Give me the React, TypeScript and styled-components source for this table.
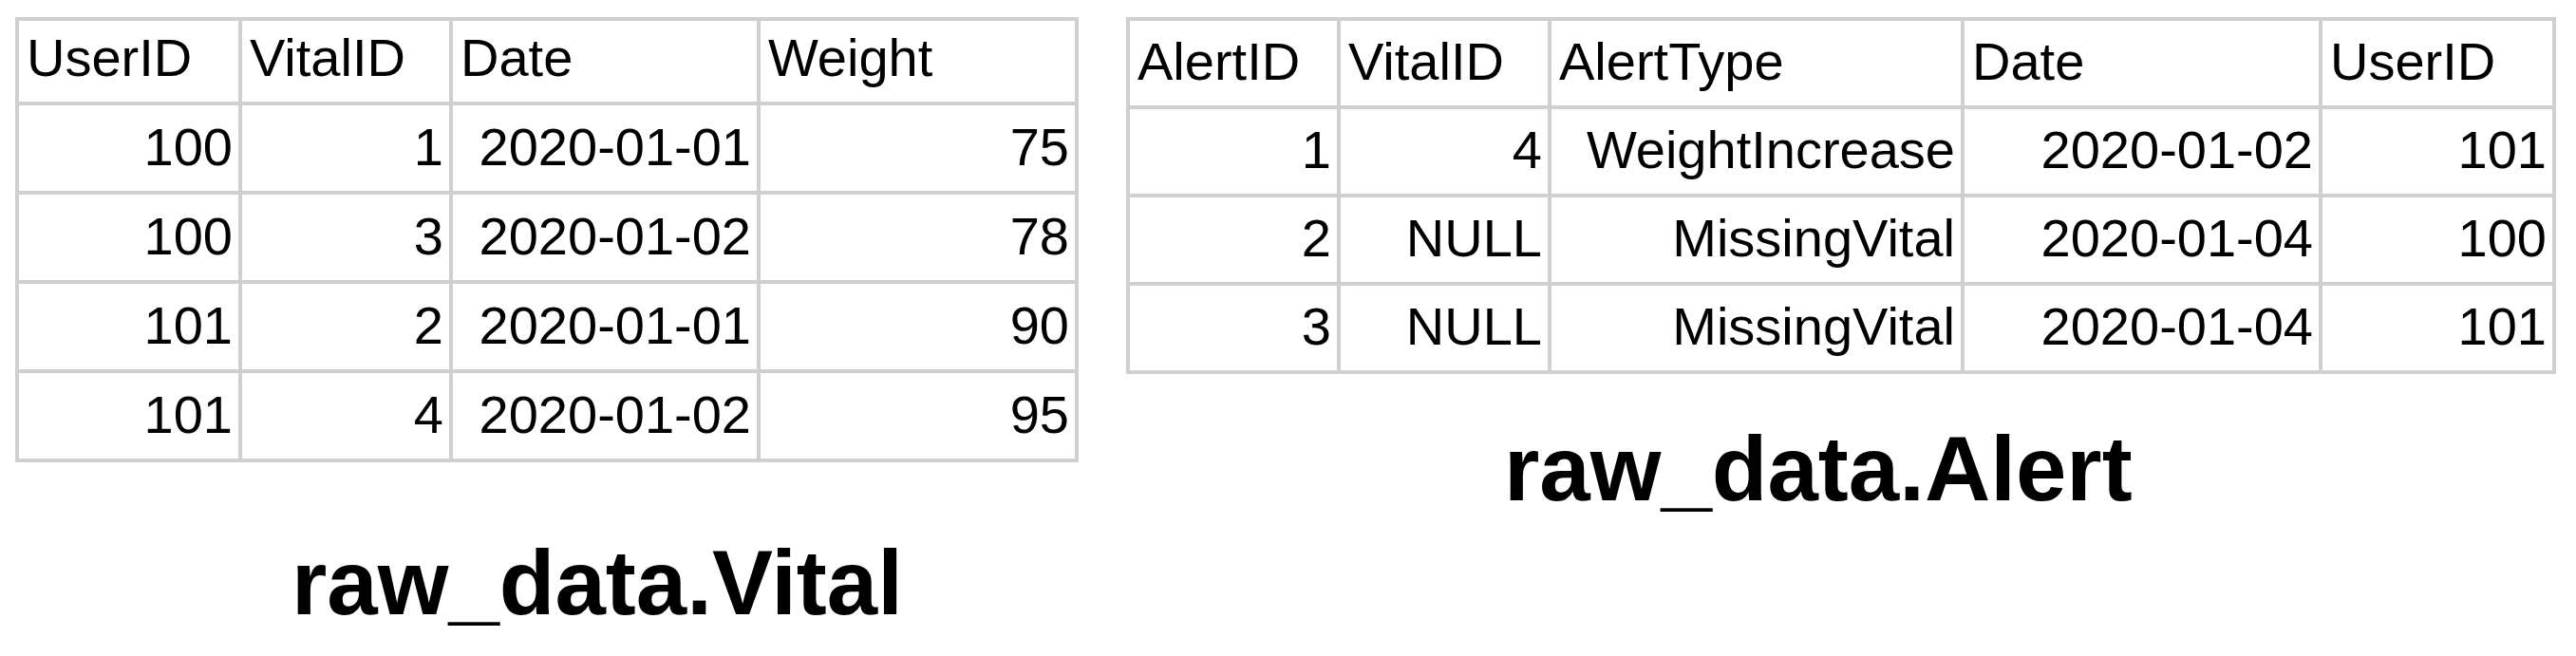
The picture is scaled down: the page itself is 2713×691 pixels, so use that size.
import React from "react";
import styled, { createGlobalStyle } from "styled-components";

const GlobalStyle = createGlobalStyle`
  html, body {
    margin: 0;
    padding: 0;
    background: #ffffff;
  }
  body {
    font-family: "Liberation Sans", Arial, sans-serif;
    color: #000000;
  }
`;

const Page = styled.div`
  display: flex;
  align-items: flex-start;
  gap: 50px;
  padding: 18px 0 0 16px;
  width: 2713px;
  height: 691px;
  box-sizing: border-box;
  background: #ffffff;
`;

const Section = styled.div`
  display: flex;
  flex-direction: column;
`;

const Grid = styled.div<{ $cols: string; $rows: string }>`
  display: grid;
  grid-template-columns: ${(p) => p.$cols};
  grid-template-rows: ${(p) => p.$rows};
  gap: 4px;
  padding: 4px;
  background: #cfcfcf;
`;

const CellBase = styled.div`
  display: flex;
  align-items: flex-end;
  background: #ffffff;
  font-size: 56px;
  line-height: 1;
  padding: 0 6px 18px 8px;
  white-space: nowrap;
  overflow: hidden;
`;

const HeadCell = styled(CellBase)`
  justify-content: flex-start;
`;

const Cell = styled(CellBase)`
  justify-content: flex-end;
`;

const Title = styled.div<{ $top: number; $left: number }>`
  margin-top: ${(p) => p.$top}px;
  padding-left: ${(p) => p.$left}px;
  font-size: 96px;
  font-weight: 700;
  line-height: 1;
  white-space: nowrap;
`;

type TableProps = {
  cols: string;
  rows: string;
  header: string[];
  data: (string | number)[][];
};

const DataTable: React.FC<TableProps> = ({ cols, rows, header, data }) => (
  <Grid $cols={cols} $rows={rows}>
    {header.map((h) => (
      <HeadCell key={h}>{h}</HeadCell>
    ))}
    {data.map((row, ri) =>
      row.map((v, ci) => <Cell key={`${ri}-${ci}`}>{v}</Cell>)
    )}
  </Grid>
);

const vitalData = [
  [100, 1, "2020-01-01", 75],
  [100, 3, "2020-01-02", 78],
  [101, 2, "2020-01-01", 90],
  [101, 4, "2020-01-02", 95],
];

const alertData = [
  [1, 4, "WeightIncrease", "2020-01-02", 101],
  [2, "NULL", "MissingVital", "2020-01-04", 100],
  [3, "NULL", "MissingVital", "2020-01-04", 101],
];

export default function App() {
  return (
    <>
      <GlobalStyle />
      <Page>
        <Section>
          <DataTable
            cols="231px 218px 320px 331px"
            rows="85px repeat(4, 90px)"
            header={["UserID", "VitalID", "Date", "Weight"]}
            data={vitalData}
          />
          <Title $top={79} $left={291}>
            raw_data.Vital
          </Title>
        </Section>
        <Section>
          <DataTable
            cols="218px 218px 431px 373px 242px"
            rows="repeat(4, 89px)"
            header={["AlertID", "VitalID", "AlertType", "Date", "UserID"]}
            data={alertData}
          />
          <Title $top={52} $left={398}>
            raw_data.Alert
          </Title>
        </Section>
      </Page>
    </>
  );
}
